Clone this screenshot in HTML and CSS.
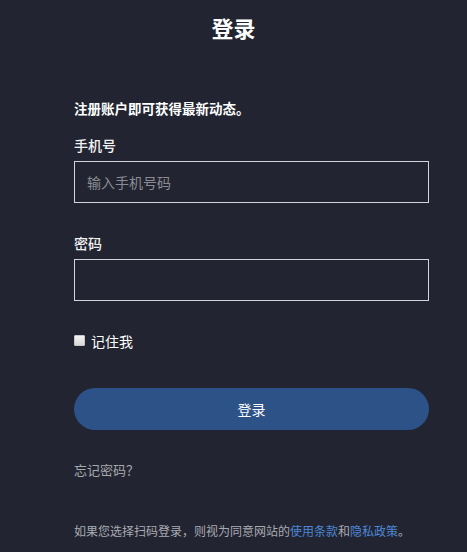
FILE: index.html
```html
<!DOCTYPE html>
<html lang="zh-CN">
<head>
<meta charset="utf-8">
<title>登录</title>
<link rel="stylesheet" href="styles.css">
</head>
<body>
<div class="page">
  <h1 class="title">登录</h1>
  <form class="form">
    <p class="intro">注册账户即可获得最新动态。</p>
    <label class="label" for="phone">手机号</label>
    <input class="field" id="phone" type="text" placeholder="输入手机号码">
    <label class="label label-pw" for="pw">密码</label>
    <input class="field" id="pw" type="password">
    <label class="remember"><input type="checkbox" class="check"><span>记住我</span></label>
    <button type="button" class="submit">登录</button>
    <a class="forgot" href="#">忘记密码？</a>
    <p class="terms">如果您选择扫码登录，则视为同意网站的<a href="#" class="link">使用条款</a>和<a href="#" class="link">隐私政策</a>。</p>
  </form>
</div>
</body>
</html>
```
FILE: styles.css
```css
html, body {
  margin: 0;
  padding: 0;
  background: #222531;
  height: 100%;
}
body {
  font-family: "Noto Sans CJK SC", "Noto Sans", sans-serif;
  color: #ffffff;
}
.page {
  display: flex;
  flex-direction: column;
  align-items: stretch;
}
.title {
  margin: 12px 0 0;
  font-size: 22px;
  line-height: 30px;
  font-weight: 700;
  text-align: center;
}
.form {
  display: flex;
  flex-direction: column;
  padding: 0 38px 0 74px;
}
.intro {
  margin: 56px 0 0;
  font-size: 13.5px;
  line-height: 20px;
  font-weight: 700;
}
.label {
  margin-top: 17px;
  font-size: 14px;
  line-height: 20px;
  font-weight: 500;
  color: #f2f2f2;
}
.label-pw {
  margin-top: 30px;
}
.field {
  margin-top: 6px;
  box-sizing: border-box;
  height: 42px;
  width: 100%;
  border: 1px solid #d3d5dc;
  background: #222531;
  color: #ffffff;
  padding: 0 12px;
  font-family: inherit;
  font-size: 14px;
  outline: none;
}
.field::placeholder {
  color: #8a8c92;
}
.remember {
  margin-top: 30px;
  display: flex;
  align-items: center;
  gap: 6px;
  font-size: 14px;
  line-height: 20px;
  color: #ffffff;
}
.check {
  margin: 0;
  width: 11px;
  height: 11px;
  appearance: none;
  -webkit-appearance: none;
  background: linear-gradient(#f4f4f4, #d8d8d8);
  border: 1px solid #c7c7c7;
  border-radius: 1px;
  position: relative;
  top: -1px;
}
.submit {
  margin-top: 37px;
  height: 42px;
  border: none;
  border-radius: 21px;
  background: #2c5288;
  color: #ffffff;
  font-family: inherit;
  font-size: 14px;
}
.forgot {
  margin-top: 30px;
  font-size: 13px;
  line-height: 20px;
  color: #a6a8ae;
  text-decoration: none;
}
.terms {
  margin: 41px 0 0;
  font-size: 12px;
  line-height: 20px;
  color: #a9abb1;
}
.link {
  color: #4d86d6;
  text-decoration: none;
}
```
